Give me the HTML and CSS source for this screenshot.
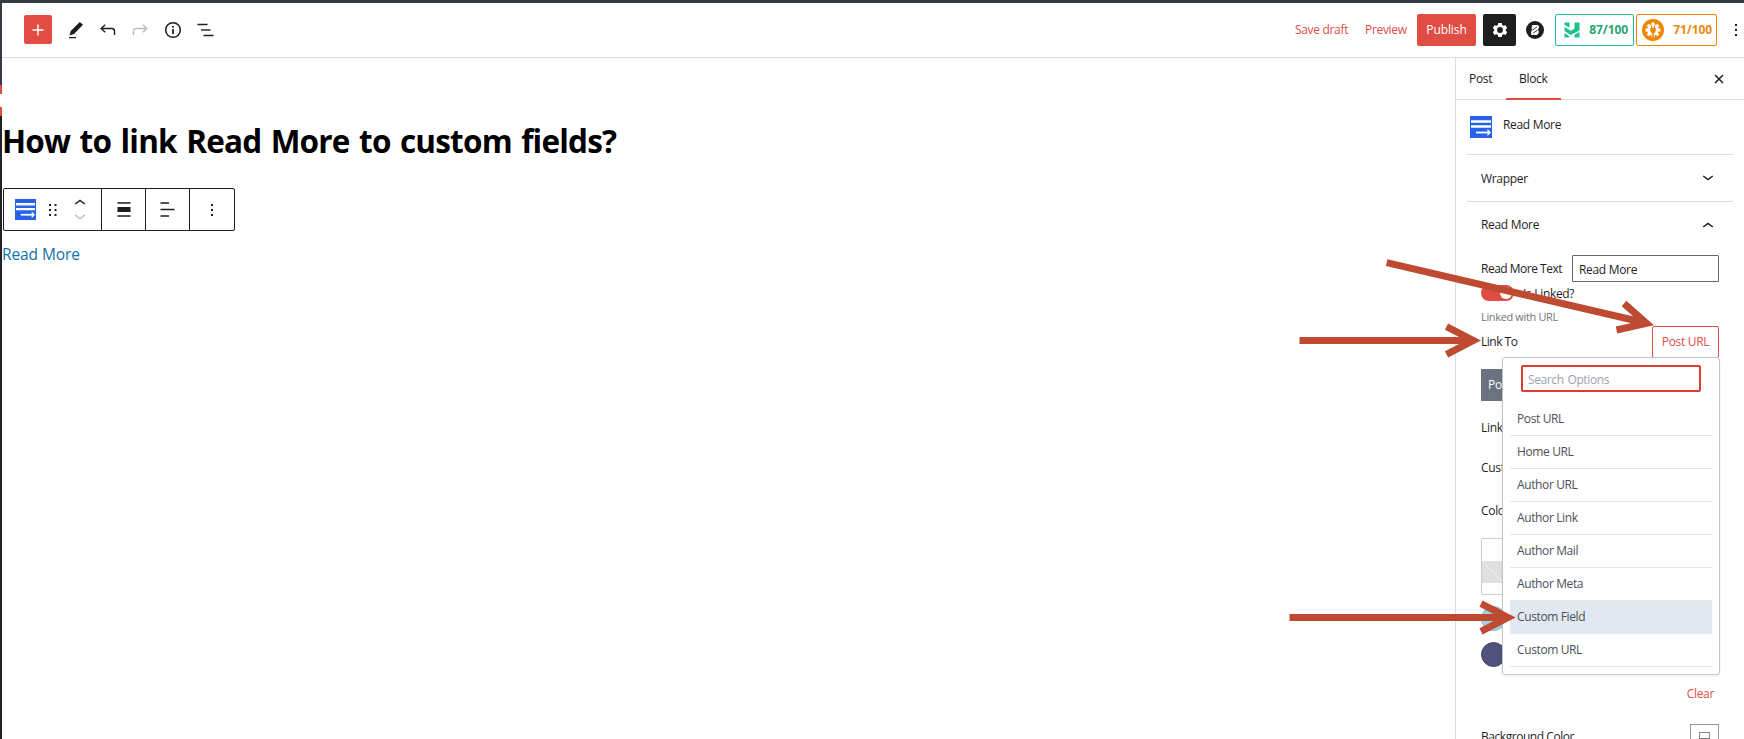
FILE: index.html
```html
<!DOCTYPE html>
<html lang="en">
<head>
<meta charset="utf-8">
<title>Edit Post</title>
<link rel="stylesheet" href="styles.css">
</head>
<body>
<svg class="defs" aria-hidden="true">
  <symbol id="readmore" viewBox="0 0 22 22"><rect width="22" height="22" fill="#2563eb"/><path d="M1 5.5h20M1 10.5h20" stroke="#fff" stroke-width="2.4"/><path d="M6 16.5h12" stroke="#fff" stroke-width="1.8"/><path d="M17.500 13l3.500 3.500-3.500 3.500z" fill="#fff"/></symbol>
  <symbol id="down" viewBox="0 0 12 6"><path d="M1.2 1L6 4.6 10.800 1" fill="none" stroke="currentColor" stroke-width="1.5"/></symbol>
  <symbol id="up" viewBox="0 0 12 6"><path d="M1.200 5L6 1.400 10.800 5" fill="none" stroke="currentColor" stroke-width="1.5"/></symbol>
</svg>
<div class="rail"><i class="rail-mark"></i></div>
<div class="app">
  <header class="topbar">
    <button class="add"><svg width="12" height="12" viewBox="0 0 12 12"><path d="M6 .5v11M.5 6h11" stroke="#fff" stroke-width="1.4"/></svg></button>
    <svg class="ic pencil" width="16" height="18" viewBox="0 0 16 18"><path d="M1.500 14.500l1.200-4.600L11.800 1l3.200 2.700-9 9.300z" fill="#1e1e1e"/><path d="M1 16.600h7" stroke="#1e1e1e" stroke-width="1.3"/></svg>
    <svg class="ic undo" width="16" height="12" viewBox="0 0 16 12"><path d="M5.200 .8L1.200 4.500l4 3.700M1.500 4.500h10.300q2.700 0 2.700 2.700V11" fill="none" stroke="#1e1e1e" stroke-width="1.4"/></svg>
    <svg class="ic redo" width="16" height="12" viewBox="0 0 16 12"><path d="M10.800 .8l4 3.700-4 3.700M14.500 4.500H4.200Q1.500 4.500 1.500 7.200V11" fill="none" stroke="#bbb" stroke-width="1.4"/></svg>
    <svg class="ic info" width="18" height="18" viewBox="0 0 18 18"><circle cx="9" cy="9" r="7.300" fill="none" stroke="#1e1e1e" stroke-width="1.5"/><path d="M9 8v5M9 5v1.700" stroke="#1e1e1e" stroke-width="1.7"/></svg>
    <svg class="ic outline" width="17" height="14" viewBox="0 0 17 14"><path d="M.5 1.500h10M6.500 12.500h10" stroke="#1e1e1e" stroke-width="1.4"/><path d="M4 7h9.500" stroke="#1e1e1e" stroke-width="1.4"/></svg>
    <div class="actions">
      <a class="save">Save draft</a>
      <a class="preview">Preview</a>
      <button class="publish">Publish</button>
      <button class="gear"><svg width="16" height="16" viewBox="0 0 16 16"><path d="M6.300 1h3.400l.5 2 1.300.8 2-.6 1.700 2.900-1.500 1.400v1.200l1.500 1.300-1.700 2.900-2-.6-1.300.8-.5 1.900H6.300l-.5-1.900-1.300-.8-2 .6L.8 10l1.500-1.300V7.500L.8 6.100l1.700-2.900 2 .6L5.800 3z" fill="#fff"/><circle cx="8" cy="8" r="2.900" fill="#1e1e1e"/></svg></button>
      <svg class="badge-b" width="18" height="18" viewBox="0 0 18 18"><circle cx="9" cy="9" r="9" fill="#1e1e1e"/><path d="M6.300 4h4.500q2.600.2 2.200 2.400-.3 1.500-1.300 2.300 1.400.8 1.100 2.500-.5 2.800-3.300 2.800H5.300q-.8-3 .6-5.200Q5 6.500 6.300 4z" fill="#fff"/><path d="M6.500 9.200l4.500-3.400M7.200 12.200l4.200-3" stroke="#1e1e1e" stroke-width=".9"/></svg>
      <div class="score green"><svg width="16" height="16" viewBox="0 0 16 16"><path d="M.5 .5h5v5L.5 3zM10.500 .5h5v8L6.800 13 .5 9V5l6.300 3.700 3.700-2.300zM.5 11l4.500 3v1.500H.5zM15.500 10v5.500h-5V12.700z" fill="#1fc18a"/></svg><b>87/100</b></div>
      <div class="score orange"><svg width="22" height="22" viewBox="0 0 22 22"><circle cx="11" cy="11" r="11" fill="#f18500"/><g stroke="#fff" stroke-width="3"><path d="M11 3.500v15M3.500 11h15M5.700 5.700l10.600 10.600M16.300 5.700L5.700 16.300"/></g><circle cx="11" cy="11" r="5.800" fill="#fff"/><path d="M8.300 9h5.400v2.700q0 2-1.900 2.300v4.800h-1.600V14q-1.900-.3-1.900-2.300zM9 6.500h1.200V9H9zM11.800 6.500H13V9h-1.200z" fill="#f18500"/></svg><b>71/100</b></div>
      <div class="dots"><i></i><i></i><i></i></div>
    </div>
  </header>
  <main class="body">
    <section class="canvas">
      <h1>How to link Read More to custom fields?</h1>
      <div class="toolbar">
        <div class="cell first">
          <svg width="21" height="21"><use href="#readmore"/></svg>
          <svg class="drag" width="8" height="14" viewBox="0 0 8 14"><path d="M0 1h2v2H0zM5.500 1h2v2h-2zM0 6h2v2H0zM5.500 6h2v2h-2zM0 11h2v2H0zM5.500 11h2v2h-2z" fill="#1e1e1e"/></svg>
          <div class="mover"><svg width="12" height="6"><use href="#up"/></svg><svg class="off" width="12" height="6"><use href="#down"/></svg></div>
        </div>
        <div class="cell"><svg width="14" height="15" viewBox="0 0 14 15"><path d="M.5 1h13M.5 14h13" stroke="#1e1e1e" stroke-width="1.400"/><path d="M.5 5h13v5H.5z" fill="#1e1e1e"/></svg></div>
        <div class="cell"><svg width="15" height="15" viewBox="0 0 15 15"><path d="M.5 1H9M.5 7.500h14M.5 14H9" stroke="#1e1e1e" stroke-width="1.400"/></svg></div>
        <div class="cell last"><div class="dots"><i></i><i></i><i></i></div></div>
      </div>
      <a class="more">Read More</a>
    </section>
    <aside class="side">
      <nav class="tabs"><a class="t-post">Post</a><a class="t-block">Block</a><svg class="close" width="10" height="10" viewBox="0 0 10 10"><path d="M1 1l8 8M9 1L1 9" stroke="#1e1e1e" stroke-width="1.500"/></svg></nav>
      <div class="card"><svg width="22" height="22"><use href="#readmore"/></svg><span>Read More</span></div>
      <div class="panel"><span>Wrapper</span><svg width="12" height="6"><use href="#down"/></svg></div>
      <div class="panel open"><span>Read More</span><svg width="12" height="6"><use href="#up"/></svg></div>
      <div class="controls">
        <div class="row text-row"><label>Read More Text</label><div class="input">Read More</div></div>
        <div class="row toggle-row"><span class="toggle"><i></i></span><span class="lk">Is Linked?</span></div>
        <p class="help">Linked with URL</p>
        <div class="row link-row"><span>Link To</span>
          <div class="picker"><button class="url">Post URL</button>
            <div class="menu">
              <div class="search">Search Options</div>
              <ul>
                <li>Post URL</li><li>Home URL</li><li>Author URL</li><li>Author Link</li><li>Author Mail</li><li>Author Meta</li><li class="on">Custom Field</li><li>Custom URL</li>
              </ul>
            </div>
          </div>
        </div>
        <button class="post-btn">Post</button>
        <p class="l1">Link</p>
        <p class="l2">Custom</p>
        <p class="l3">Color</p>
        <div class="swatch"><svg width="60" height="22"><path d="M0 0l22 22" stroke="#f4f4f4"/></svg></div>
        <i class="dot teal"></i>
        <i class="dot navy"></i>
        <a class="clear">Clear</a>
        <div class="row bg-row"><span>Background Color</span><span class="bg-box"><i></i></span></div>
      </div>
    </aside>
  </main>
</div>
<svg class="arrows" width="1744" height="739" fill="none" stroke="#be4a31" stroke-width="7">
  <path d="M1386.700 262.700L1646 323M1624 303.500L1646.500 323.300L1616.500 330"/>
  <path d="M1299.500 340.500H1473M1446.500 326.700L1473.300 340.500L1446.500 354.300"/>
  <path d="M1289.500 617.500H1508M1481 603.700L1508 617.500L1481 631.300"/>
</svg>
</body>
</html>
```
FILE: styles.css
```css
* { box-sizing: border-box; }
body { margin: 0; width: 1744px; height: 739px; overflow: hidden; position: relative; display: flex; background: #fff; border-top: 3px solid #363b42; font: 12px/16px "Open Sans", "Noto Sans", sans-serif; letter-spacing: -0.32px; color: #1e1e1e; }
svg { display: block; flex: none; }
p, h1, ul { margin: 0; padding: 0; }
button { font: inherit; letter-spacing: inherit; border: 0; padding: 0; margin: 0; }
.defs { position: absolute; width: 0; height: 0; }
.rail { width: 2px; flex: none; background: linear-gradient(#363b42 0, #363b42 82px, #1d2327 113px); padding-top: 82px; }
.rail-mark { display: block; height: 31px; background: linear-gradient(#e14d43 9px, #fff 9px, #fff 22px, #e14d43 22px); }
.app { flex: 1; display: flex; flex-direction: column; min-width: 0; }
.topbar { height: 55px; flex: none; border-bottom: 1px solid #ddd; display: flex; align-items: center; padding-left: 22px; }
.add { width: 28px; height: 29px; margin-bottom: 1px; background: #e14d43; border-radius: 2px; display: grid; place-items: center; }
.pencil { margin-left: 16px; }
.undo { margin-left: 16px; }
.redo { margin-left: 16px; }
.info { margin-left: 16px; }
.outline { margin-left: 15px; }
.actions { margin-left: auto; display: flex; align-items: center; color: #e14d43; }
.save { width: 70px; }
.preview { width: 52px; }
.publish { width: 59px; height: 32px; background: #e14d43; color: #fff; border-radius: 2px; letter-spacing: -.1px; }
.gear { width: 33px; height: 32px; margin-left: 7px; background: #1e1e1e; border-radius: 2px; display: grid; place-items: center; }
.badge-b { margin-left: 10px; }
.score { height: 32px; border: 1px solid; border-radius: 2px; display: flex; align-items: center; letter-spacing: -.1px; }
.score b { margin-left: auto; font-size: 12px; }
.green { width: 79px; margin-left: 11px; padding: 0 5px 0 8px; border-color: #1fc18a; color: #27a673; }
.orange { width: 81px; margin-left: 2px; padding: 0 4px 0 5px; border-color: #f18500; color: #ed8a10; }
.dots { display: flex; flex-direction: column; gap: 3px; }
.dots i { width: 2px; height: 2px; background: #1e1e1e; }
.actions .dots { margin: 0 7px 0 18px; }
.body { flex: 1; display: flex; min-height: 0; }
.canvas { flex: 1; }
h1 { padding: 60px 0 0; font-size: 31.5px; line-height: 46px; font-weight: 700; letter-spacing: -.8px; word-spacing: 2px; color: #000; white-space: nowrap; }
.toolbar { margin: 24px 0 0 1px; width: 232px; height: 43px; border: 1px solid #1e1e1e; border-radius: 2px; display: flex; }
.cell { width: 44px; border-right: 1px solid #1e1e1e; display: flex; align-items: center; justify-content: center; }
.first { width: 98px; justify-content: flex-start; padding-left: 11px; }
.last { flex: 1; border: 0; }
.drag { margin-left: 13px; }
.mover { margin-left: 17px; display: flex; flex-direction: column; gap: 9px; }
.off { color: #bbb; }
.more { display: block; margin-top: 11px; font-size: 15.5px; line-height: 24px; color: #0f73a9; letter-spacing: -.1px; }
.side { width: 289px; flex: none; border-left: 1px solid #ddd; display: flex; flex-direction: column; }
.tabs { height: 42px; flex: none; border-bottom: 1px solid #ddd; display: flex; }
.t-post { padding: 13px 0 0 13px; width: 50px; }
.t-block { width: 55px; padding: 13px 0 0 13px; margin-bottom: -1px; border-bottom: 2px solid #e14d43; }
.close { margin: 16px 20px 0 auto; }
.card { height: 54px; flex: none; display: flex; padding: 16px 0 0 14px; gap: 11px; margin-right: 11px; }
.card span { padding-top: 1px; }
.panel { height: 47px; flex: none; margin: 0 11px; border-top: 1px solid #ddd; display: flex; justify-content: space-between; align-items: center; padding: 0 19px 0 14px; }
.panel span { padding-top: 1px; }
.panel.open span { padding-top: 0; }
.controls { padding: 7px 25px 0 25px; display: flex; flex-direction: column; flex: 1; min-height: 0; white-space: nowrap; }
.row { display: flex; justify-content: space-between; flex: none; }
.text-row { height: 27px; align-items: center; }
.text-row label { letter-spacing: -.5px; }
.input { width: 147px; height: 27px; border: 1px solid #666; border-radius: 1px; padding: 6px 0 0 6px; }
.toggle-row { margin-top: 3px; height: 16px; justify-content: flex-start; }
.toggle { width: 33px; height: 16px; border-radius: 8px; background: #e14d43; padding: 2px 2px 0 19px; }
.toggle i { display: block; width: 12px; height: 12px; border-radius: 50%; background: #fff; }
.lk { margin-left: 9px; padding-top: 1px; }
.help { margin-top: 8px; font-size: 11px; color: #757575; flex: none; letter-spacing: -.35px; }
.link-row { margin-top: 1px; height: 32px; align-items: center; }
.link-row > span { letter-spacing: -.5px; }
.picker { position: relative; }
.url { display: block; width: 67px; height: 32px; border: 1px solid #e14d43; border-radius: 2px; background: #fff; color: #e14d43; }
.menu { position: absolute; right: -1px; top: 31px; width: 218px; height: 318px; border: 1px solid #c4c6ca; border-radius: 3px; background: #fff; padding: 7px 7px 0; box-shadow: 0 1px 3px rgba(0,0,0,.08); color: #4b5057; letter-spacing: -.38px; }
.search { margin: 0 11px 0; width: 180px; height: 27px; border: 2px solid #dc3c33; border-radius: 2px; padding: 5px 0 0 5px; color: #9ca3af; font-size: 12px; letter-spacing: -.38px; word-spacing: 1px; }
.menu ul { list-style: none; margin-top: 11px; }
.menu li { height: 33px; border-bottom: 1px solid #e3e5e9; padding: 8px 0 0 7px; font-size: 12px; }
.menu .on { background: #e2e8f0; border-color: #e2e8f0; }
.post-btn { flex: none; margin-top: 11px; width: 60px; height: 32px; background: #6b7280; color: #fff; text-align: left; padding-left: 7px; }
.l1 { margin-top: 19px; flex: none; }
.l2 { margin-top: 24px; flex: none; }
.l3 { margin-top: 27px; flex: none; }
.swatch { flex: none; margin-top: 19px; width: 100px; height: 57px; border: 1px solid #ccc; border-radius: 2px; padding-top: 22px; }
.swatch svg { background: #e0e0e0; }
.dot { flex: none; width: 25px; height: 25px; border-radius: 50%; }
.teal { margin-top: 11px; background: #9ad5e3; border: 1px solid #83b7c3; }
.navy { margin-top: 11px; background: #50527d; border: 1px solid #444668; }
.clear { flex: none; margin: 19px 5px 0 auto; color: #e14d43; }
.bg-row { margin-top: 22px; height: 30px; }
.bg-row > span:first-child { padding-top: 5px; letter-spacing: -.45px; }
.bg-box { width: 29px; height: 30px; border: 1px solid #8d96a0; padding: 7px 8px; }
.bg-box i { display: block; height: 14px; border: 1px solid #888; background: linear-gradient(#fff 5px, #777 5px, #777 6px, #fff 6px); }
.arrows { position: absolute; left: 0; top: -3px; pointer-events: none; }
```
